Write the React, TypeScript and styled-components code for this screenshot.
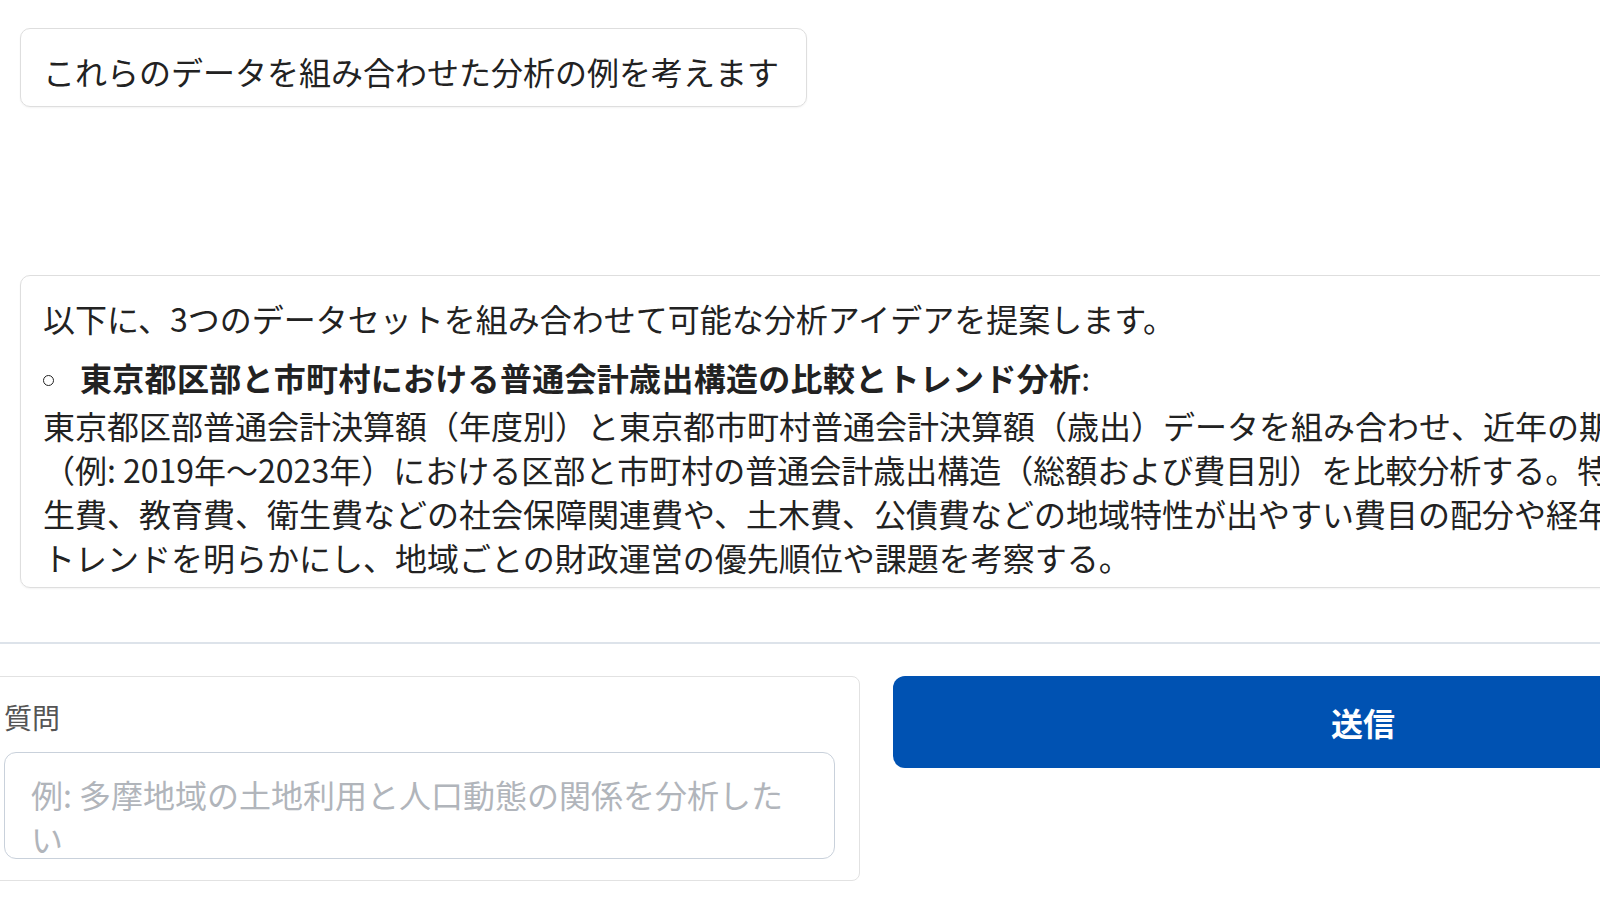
import React, { useState } from "react";
import styled, { createGlobalStyle } from "styled-components";

const GlobalStyle = createGlobalStyle`
  html, body {
    margin: 0;
    padding: 0;
    background: #ffffff;
    overflow: hidden;
  }
  body {
    font-family: "Noto Sans CJK JP", "Noto Sans", sans-serif;
    color: #222222;
  }
`;

function App() {
  const [question, setQuestion] = useState("");

  return (
    <Page>
      <GlobalStyle />
      <Chat>
        <UserBubble>これらのデータを組み合わせた分析の例を考えます</UserBubble>
        <AnswerBubble>
          <Paragraph>
            以下に、3つのデータセットを組み合わせて可能な分析アイデアを提案します。
          </Paragraph>
          <IdeaList>
            <IdeaItem>
              <IdeaTitle>
                <Bullet />
                <strong>東京都区部と市町村における普通会計歳出構造の比較とトレンド分析</strong>:
              </IdeaTitle>
              東京都区部普通会計決算額（年度別）と東京都市町村普通会計決算額（歳出）データを組み合わせ、近年の期間（例: 2019年～2023年）における区部と市町村の普通会計歳出構造（総額および費目別）を比較分析する。特に、民生費、教育費、衛生費などの社会保障関連費や、土木費、公債費などの地域特性が出やすい費目の配分や経年変化のトレンドを明らかにし、地域ごとの財政運営の優先順位や課題を考察する。
            </IdeaItem>
          </IdeaList>
        </AnswerBubble>
      </Chat>
      <Divider />
      <FormRow>
        <QuestionCard>
          <Label htmlFor="question">質問</Label>
          <QuestionInput
            id="question"
            value={question}
            onChange={(e) => setQuestion(e.target.value)}
            placeholder="例: 多摩地域の土地利用と人口動態の関係を分析したい"
          />
        </QuestionCard>
        <SendButton type="button">送信</SendButton>
      </FormRow>
    </Page>
  );
}

export default App;

const Page = styled.div`
  width: 1900px;
  padding-top: 28px;
`;

const Chat = styled.div`
  display: flex;
  flex-direction: column;
  align-items: flex-start;
  padding-left: 20px;
`;

const UserBubble = styled.div`
  width: fit-content;
  border: 1px solid #dedede;
  border-radius: 10px;
  padding: 20px 27px 13px 22px;
  font-size: 32px;
  line-height: 44px;
  box-shadow: 0 1px 2px rgba(0, 0, 0, 0.05);
`;

const AnswerBubble = styled.div`
  box-sizing: border-box;
  width: 1713px;
  height: 313px;
  margin-top: 168px;
  border: 1px solid #dedede;
  border-radius: 10px;
  padding: 20px 22px;
  font-size: 32px;
  line-height: 44px;
  overflow: hidden;
  box-shadow: 0 1px 2px rgba(0, 0, 0, 0.05);
`;

const Paragraph = styled.p`
  margin: 0;
`;

const IdeaList = styled.ul`
  margin: 15px 0 0;
  padding: 0;
  list-style: none;
`;

const IdeaItem = styled.li`
  margin: 0;
`;

const IdeaTitle = styled.span`
  display: block;
  margin-bottom: 4px;

  strong {
    font-weight: 700;
    letter-spacing: 0.3px;
  }
`;

const Bullet = styled.span`
  display: inline-block;
  box-sizing: border-box;
  width: 11px;
  height: 11px;
  border: 1.5px solid #222222;
  border-radius: 50%;
  margin-right: 26px;
  vertical-align: 5px;
`;

const Divider = styled.div`
  margin-top: 54px;
  border-top: 2px solid #dde3ea;
`;

const FormRow = styled.div`
  display: grid;
  grid-template-columns: 881px 940px;
  column-gap: 33px;
  align-items: start;
  margin-top: 32px;
  margin-left: -21px;
`;

const QuestionCard = styled.div`
  box-sizing: border-box;
  border: 1px solid #e2e2e2;
  border-radius: 8px;
  padding: 21px 24px 21px;
`;

const Label = styled.label`
  display: block;
  margin-bottom: 15px;
  font-size: 28px;
  line-height: 39px;
  color: #555555;
`;

const QuestionInput = styled.textarea`
  display: block;
  box-sizing: border-box;
  width: 100%;
  height: 107px;
  margin: 0;
  padding: 19px 30px 19px 26px;
  border: 1px solid #c9d1db;
  border-radius: 12px;
  font-family: inherit;
  font-size: 32px;
  line-height: 44px;
  color: #222222;
  background: #ffffff;
  resize: none;
  overflow: hidden;
  outline: none;

  &::placeholder {
    color: #b1b5bb;
  }
`;

const SendButton = styled.button`
  height: 92px;
  border: none;
  border-radius: 12px;
  background: #0052b2;
  color: #ffffff;
  font-family: inherit;
  font-size: 32px;
  font-weight: 700;
  cursor: pointer;
`;
